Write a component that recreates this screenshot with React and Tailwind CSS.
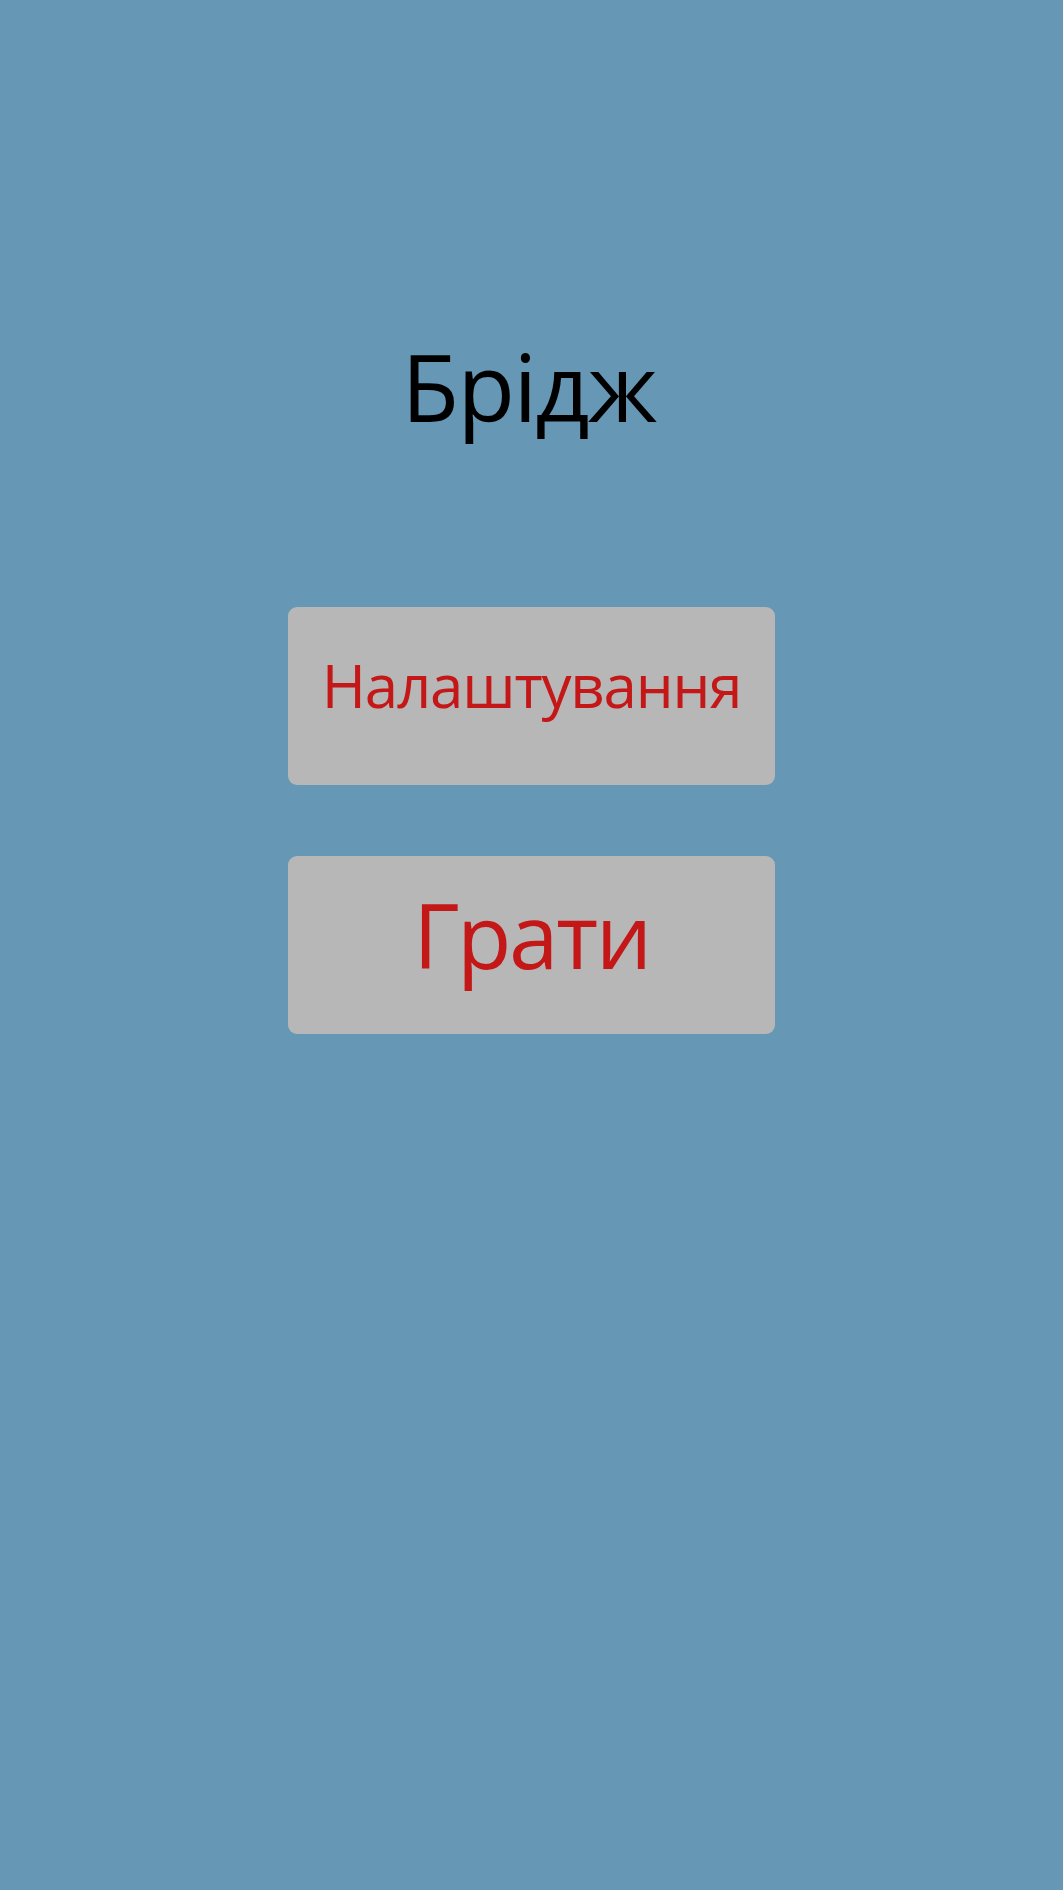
import React from "react";

const App = () => {
  return (
    <div
      className="min-h-[1890px] w-full bg-[#6697b4] flex flex-col items-center"
      style={{ fontFamily: '"Open Sans", "Noto Sans", sans-serif' }}
    >
      <h1 className="mt-[339px] pr-[6px] text-[94px] leading-none tracking-[-1.6px] text-black font-normal">Брідж</h1>
      <div className="mt-[174px] flex flex-col gap-[71px]">
        <button className="w-[487px] h-[178px] rounded-[9px] bg-[#b7b7b7] text-[#c41717] text-[60px] leading-none tracking-[-1.2px] pt-[48px] flex items-start justify-center">
          Налаштування
        </button>
        <button className="w-[487px] h-[178px] rounded-[9px] bg-[#b7b7b7] text-[#c41717] text-[89px] leading-none tracking-[-2.4px] pt-[34px] flex items-start justify-center">
          Грати
        </button>
      </div>
    </div>
  );
};

export default App;
